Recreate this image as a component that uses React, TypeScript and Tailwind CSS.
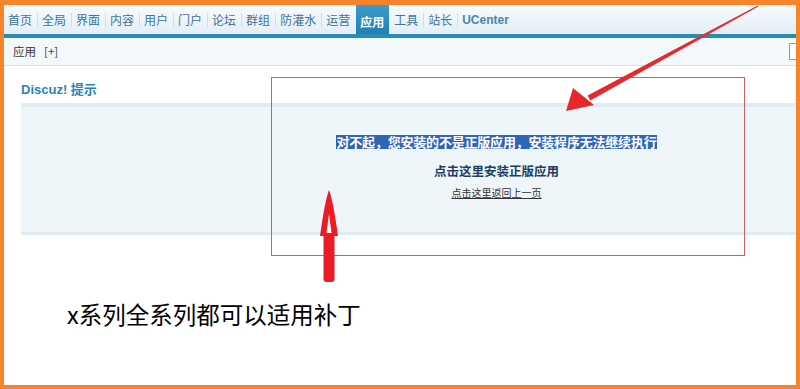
import React from "react";

const navItems = ["首页", "全局", "界面", "内容", "用户", "门户", "论坛", "群组", "防灌水", "运营", "应用", "工具", "站长"];

export default function App() {
  return (
    <div className="relative w-[800px] h-[389px] overflow-hidden bg-white font-['Noto_Sans_CJK_SC',sans-serif]">
      <div className="w-[800px] h-[389px] border-t-[5px] border-l-[4px] border-r-[4px] border-b-[4px] border-[#f7832b] flex flex-col">
        {/* top nav */}
        <div className="flex flex-col">
          <div className="h-[29px] flex items-stretch bg-gradient-to-b from-[#f8fbfd] to-[#e2eef5]">
            {navItems.map((it, i) => {
              const active = it === "应用";
              return (
                <div key={it} className="flex items-stretch">
                  {i > 0 && !active && navItems[i - 1] !== "应用" ? (
                    <div className="w-px self-center h-[14px] bg-[#cfdfe9]" />
                  ) : (
                    i > 0 && <div className="w-px" />
                  )}
                  <div
                    className={
                      active
                        ? "flex items-center pl-[4px] pr-[5px] text-[12px] text-white font-bold bg-gradient-to-b from-[#3b9ccd] to-[#1b7cb1] -mb-[4px]"
                        : "flex items-center pl-[4px] pr-[5px] text-[12px] text-[#3f7497]"
                    }
                  >
                    {it}
                  </div>
                </div>
              );
            })}
            <div className="flex items-stretch">
              <div className="w-px self-center h-[14px] bg-[#cfdfe9]" />
              <div className="flex items-center pl-[4px] pr-[5px] text-[12px] font-bold text-[#4a86ad] font-['Liberation_Sans',sans-serif]">
                UCenter
              </div>
            </div>
          </div>
          <div className="h-[4px] bg-[#2a8bbb]" />
        </div>
        {/* sub bar */}
        <div className="h-[28px] flex items-center bg-[#f3f8fb] border-b border-[#d6e2ea] pl-[9px]">
          <span className="text-[11.5px] text-[#333]">应用</span>
          <span className="ml-[8px] text-[11.5px] text-[#444]">[+]</span>
          <div className="ml-auto w-[7px] h-[17px] border border-r-0 border-[#9a9a9a] bg-white" />
        </div>
        {/* content */}
        <div className="flex flex-col">
          <div className="pl-[17px] pt-[16px] text-[13px] leading-[16px] font-bold text-[#2a85b2] font-['Liberation_Sans','Noto_Sans_CJK_SC',sans-serif]">
            Discuz! 提示
          </div>
          <div className="ml-[17px] mt-[5px] h-[132px] bg-[#eef6fa] border-t-[4px] border-b-[3px] border-[#e0ecf3] flex flex-col items-center pl-[176px] pt-[28px]">
            <span className="bg-[#3264b5] text-white font-bold text-[13px] leading-[14px] tracking-[-0.2px]">
              对不起，您安装的不是正版应用，安装程序无法继续执行
            </span>
            <span className="mt-[15px] text-[12.5px] leading-[14px] font-bold text-[#1d3f63]">
              点击这里安装正版应用
            </span>
            <span className="mt-[9px] text-[10px] leading-[12px] text-[#333] underline">
              点击这里返回上一页
            </span>
          </div>
          <div className="ml-[63px] mt-[64px] text-[23.5px] leading-[30px] text-black">
            x系列全系列都可以适用补丁
          </div>
        </div>
      </div>

      {/* annotations */}
      <div className="absolute left-[271px] top-[77px] w-[474px] h-[179px] border border-[#c9625d]" />
      <svg className="absolute left-0 top-0 pointer-events-none" width="800" height="389" viewBox="0 0 800 389">
        <polygon points="758.3,6.6 757.7,5.4 587.6,95.4 590.4,100.6" fill="#e42a2f" />
        <polygon points="566,111 573,88 594,105" fill="#e8262b" />
        <path d="M329,190 Q333,200 338,236 L320,236 Q325,200 329,190 Z" fill="#ec1c27" />
        <path d="M329,214 L331.5,233 L326.5,233 Z" fill="#ffffff" />
        <rect x="323.5" y="234" width="11" height="48" rx="3" fill="#ec1c27" />
      </svg>
    </div>
  );
}
